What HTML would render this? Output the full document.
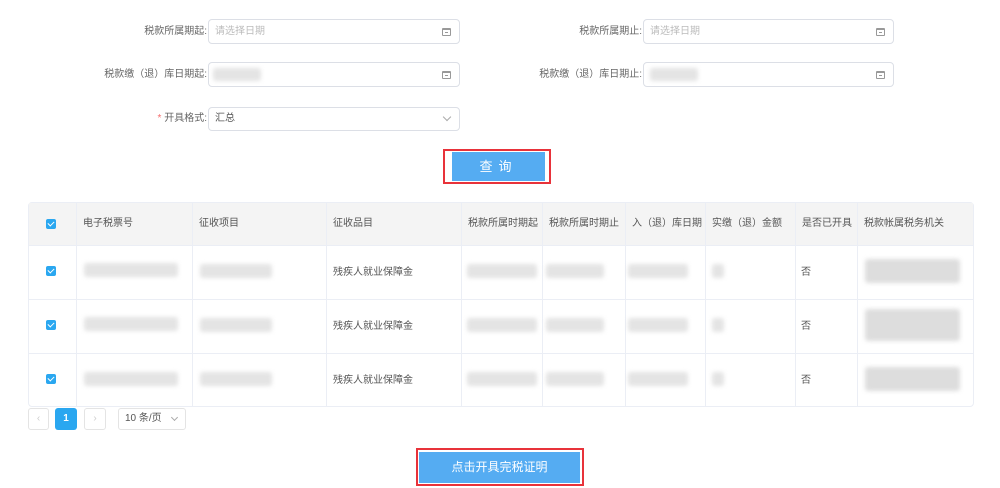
<!DOCTYPE html>
<html><head><meta charset="utf-8"><style>
*{box-sizing:border-box;margin:0;padding:0}
body{width:1000px;height:488px;background:#fff;position:relative;overflow:hidden;font-family:"Liberation Sans","Noto Sans CJK SC",sans-serif;font-size:10px;color:#555}
.a{position:absolute}
.lbl{position:absolute;text-align:right;color:#666;font-size:10px;line-height:25px}
.inp{position:absolute;border:1px solid #dcdfe6;border-radius:4px;background:#fff;height:25px;line-height:23px;padding-left:6px;color:#bbb;font-size:10px}
.cal{position:absolute;right:8px;top:8px;width:9px;height:8px;border:1px solid #999;border-top-width:2px;border-radius:1px}
.cal:after{content:"";position:absolute;left:2px;top:2px;width:3px;height:1px;background:#999}
.bl{position:absolute;background:#e4e4e4;filter:blur(2px);border-radius:3px}
.cb{position:absolute;width:10px;height:10px;background:#2aa7f0;border-radius:2px}
.cb:after{content:"";position:absolute;left:3px;top:1px;width:3px;height:5px;border:solid #fff;border-width:0 1.5px 1.5px 0;transform:rotate(45deg)}
.th{position:absolute;top:202px;height:43px;line-height:43px;font-size:10px;color:#555;padding-left:7px}
.vl{position:absolute;top:202px;height:205px;width:1px;background:#ebeef5}
.hl{position:absolute;left:28px;width:946px;height:1px;background:#ebeef5}
.td{position:absolute;font-size:10px;color:#555}
</style></head><body>
<div class="lbl" style="left:100px;width:107px;top:19px">税款所属期起:</div>
<div class="inp" style="left:208px;top:19px;width:252px">请选择日期<span class="cal"></span></div>
<div class="lbl" style="left:530px;width:112px;top:19px">税款所属期止:</div>
<div class="inp" style="left:643px;top:19px;width:251px">请选择日期<span class="cal"></span></div>
<div class="lbl" style="left:80px;width:127px;top:62px">税款缴（退）库日期起:</div>
<div class="inp" style="left:208px;top:62px;width:252px"><span class="cal"></span></div>
<div class="bl" style="left:213px;top:68px;width:48px;height:13px"></div>
<div class="lbl" style="left:520px;width:122px;top:62px">税款缴（退）库日期止:</div>
<div class="inp" style="left:643px;top:62px;width:251px"><span class="cal"></span></div>
<div class="bl" style="left:650px;top:68px;width:48px;height:13px"></div>
<div class="lbl" style="left:100px;width:107px;top:106px"><span style="color:#f56c6c">* </span>开具格式:</div>
<div class="inp" style="left:208px;top:107px;width:252px;height:24px;color:#555;line-height:22px">汇总<span class="a" style="right:9px;top:6px;width:6px;height:6px;border:solid #aaa;border-width:0 1px 1px 0;transform:rotate(45deg)"></span></div>
<div class="a" style="left:443px;top:149px;width:108px;height:35px;border:2px solid #e8323a"></div>
<div class="a" style="left:452px;top:152px;width:93px;height:29px;background:#55acf2;color:#fff;font-size:13px;text-align:center;line-height:29px;letter-spacing:6px">查询</div>

<div class="a" style="left:28px;top:202px;width:946px;height:205px;border:1px solid #ebeef5;border-radius:4px"></div>
<div class="a" style="left:29px;top:203px;width:944px;height:42px;background:#f4f4f4"></div>
<div class="hl" style="top:245px"></div><div class="hl" style="top:299px"></div><div class="hl" style="top:353px"></div>
<div class="vl" style="left:76px"></div><div class="vl" style="left:192px"></div><div class="vl" style="left:326px"></div><div class="vl" style="left:461px"></div><div class="vl" style="left:542px"></div><div class="vl" style="left:625px"></div><div class="vl" style="left:705px"></div><div class="vl" style="left:795px"></div><div class="vl" style="left:857px"></div>
<div class="cb" style="left:46px;top:219px"></div>
<div class="th" style="left:76px">电子税票号</div><div class="th" style="left:192px">征收项目</div><div class="th" style="left:326px">征收品目</div><div class="th" style="left:461px">税款所属时期起</div><div class="th" style="left:542px">税款所属时期止</div><div class="th" style="left:625px">入（退）库日期</div><div class="th" style="left:705px">实缴（退）金额</div><div class="th" style="left:795px">是否已开具</div><div class="th" style="left:857px">税款帐属税务机关</div>

<div class="cb" style="left:46px;top:266px"></div>
<div class="cb" style="left:46px;top:320px"></div>
<div class="cb" style="left:46px;top:374px"></div>
<div class="td" style="left:333px;top:263px">残疾人就业保障金</div>
<div class="td" style="left:333px;top:317px">残疾人就业保障金</div>
<div class="td" style="left:333px;top:371px">残疾人就业保障金</div>
<div class="td" style="left:801px;top:263px">否</div>
<div class="td" style="left:801px;top:317px">否</div>
<div class="td" style="left:801px;top:371px">否</div>

<div class="bl" style="left:84px;top:263px;width:94px;height:14px"></div>
<div class="bl" style="left:200px;top:264px;width:72px;height:14px"></div>
<div class="bl" style="left:467px;top:264px;width:70px;height:14px"></div>
<div class="bl" style="left:546px;top:264px;width:58px;height:14px"></div>
<div class="bl" style="left:628px;top:264px;width:60px;height:14px"></div>
<div class="bl" style="left:712px;top:264px;width:12px;height:14px"></div>
<div class="bl" style="left:865px;top:259px;width:95px;height:24px;background:#ddd"></div>

<div class="bl" style="left:84px;top:317px;width:94px;height:14px"></div>
<div class="bl" style="left:200px;top:318px;width:72px;height:14px"></div>
<div class="bl" style="left:467px;top:318px;width:70px;height:14px"></div>
<div class="bl" style="left:546px;top:318px;width:58px;height:14px"></div>
<div class="bl" style="left:628px;top:318px;width:60px;height:14px"></div>
<div class="bl" style="left:712px;top:318px;width:12px;height:14px"></div>
<div class="bl" style="left:865px;top:309px;width:95px;height:32px;background:#ddd"></div>

<div class="bl" style="left:84px;top:372px;width:94px;height:14px"></div>
<div class="bl" style="left:200px;top:372px;width:72px;height:14px"></div>
<div class="bl" style="left:467px;top:372px;width:70px;height:14px"></div>
<div class="bl" style="left:546px;top:372px;width:58px;height:14px"></div>
<div class="bl" style="left:628px;top:372px;width:60px;height:14px"></div>
<div class="bl" style="left:712px;top:372px;width:12px;height:14px"></div>
<div class="bl" style="left:865px;top:367px;width:95px;height:24px;background:#ddd"></div>

<div class="a" style="left:28px;top:408px;width:21px;height:22px;border:1px solid #e4e4e4;border-radius:3px;color:#ccc;text-align:center;line-height:20px">‹</div>
<div class="a" style="left:55px;top:408px;width:22px;height:22px;background:#2aa7f0;border-radius:3px;color:#fff;text-align:center;line-height:22px;font-weight:bold">1</div>
<div class="a" style="left:84px;top:408px;width:22px;height:22px;border:1px solid #e4e4e4;border-radius:3px;color:#ccc;text-align:center;line-height:20px">›</div>
<div class="a" style="left:118px;top:408px;width:68px;height:22px;border:1px solid #e4e4e4;border-radius:3px;line-height:20px;padding-left:6px;color:#555">10 条/页<span class="a" style="right:8px;top:6px;width:5px;height:5px;border:solid #aaa;border-width:0 1px 1px 0;transform:rotate(45deg)"></span></div>

<div class="a" style="left:416px;top:448px;width:168px;height:38px;border:2px solid #e8323a"></div>
<div class="a" style="left:419px;top:452px;width:161px;height:31px;background:#55acf2;color:#fff;font-size:12px;text-align:center;line-height:31px">点击开具完税证明</div>
</body></html>
